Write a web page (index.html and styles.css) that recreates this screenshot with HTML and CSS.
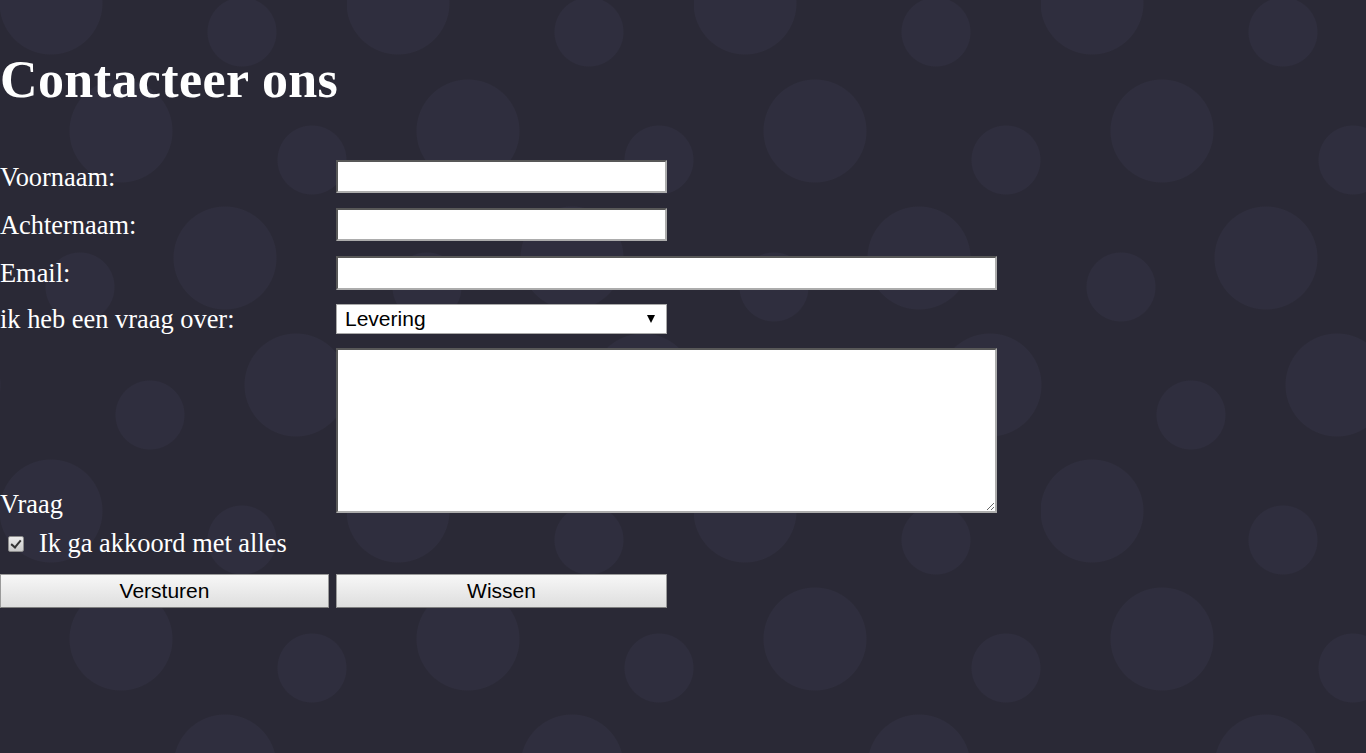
FILE: index.html
```html
<!DOCTYPE html>
<html lang="nl">
<head>
<meta charset="utf-8">
<title>Contacteer ons</title>
<link rel="stylesheet" href="styles.css">
</head>
<body>
<main class="page">
  <h1 class="title">Contacteer ons</h1>
  <form class="contact-form">
    <label class="field-label" for="voornaam">Voornaam:</label>
    <input class="text-input" id="voornaam" type="text">

    <label class="field-label" for="achternaam">Achternaam:</label>
    <input class="text-input" id="achternaam" type="text">

    <label class="field-label" for="email">Email:</label>
    <input class="text-input wide" id="email" type="email">

    <label class="field-label" for="onderwerp">ik heb een vraag over:</label>
    <div class="select-wrap">
      <select class="topic" id="onderwerp">
        <option>Levering</option>
        <option>Betaling</option>
        <option>Retour</option>
      </select>
    </div>

    <label class="field-label vraag" for="vraag">Vraag</label>
    <textarea class="question" id="vraag"></textarea>

    <div class="agree">
      <input class="check" id="akkoord" type="checkbox" checked>
      <label class="agree-label" for="akkoord">Ik ga akkoord met alles</label>
    </div>

    <button class="btn" type="submit">Versturen</button>
    <button class="btn" type="reset">Wissen</button>
  </form>
</main>
</body>
</html>
```

FILE: styles.css
```css
html, body {
  margin: 0;
  padding: 0;
}

body {
  min-height: 753px;
  color: #ffffff;
  font-family: "Liberation Serif", "Times New Roman", serif;
  background-color: #2a2936;
  background-image:
    radial-gradient(circle 52px at 51px 3px, #2f2e3e 98%, transparent 100%),
    radial-gradient(circle 52px at 51px 511px, #2f2e3e 98%, transparent 100%),
    radial-gradient(circle 52px at 121px 131px, #2f2e3e 98%, transparent 100%),
    radial-gradient(circle 52px at 225px 258px, #2f2e3e 98%, transparent 100%),
    radial-gradient(circle 52px at 296px 385px, #2f2e3e 98%, transparent 100%),
    radial-gradient(circle 52px at -51px 385px, #2f2e3e 98%, transparent 100%),
    radial-gradient(circle 35px at 242px 32px, #2f2e3e 97%, transparent 100%),
    radial-gradient(circle 35px at 242px 540px, #2f2e3e 97%, transparent 100%),
    radial-gradient(circle 35px at 312px 160px, #2f2e3e 97%, transparent 100%),
    radial-gradient(circle 35px at -35px 160px, #2f2e3e 97%, transparent 100%),
    radial-gradient(circle 35px at 80px 287px, #2f2e3e 97%, transparent 100%),
    radial-gradient(circle 35px at 150px 415px, #2f2e3e 97%, transparent 100%);
  background-size: 347px 508px;
  background-repeat: repeat;
}

.page {
  display: flex;
  flex-direction: column;
}

.title {
  margin: 51px 0 51px;
  font-size: 52px;
  line-height: 58px;
  letter-spacing: 0.4px;
  font-weight: bold;
}

.contact-form {
  display: grid;
  grid-template-columns: 329px 661px;
  grid-template-rows: 33px 33px 33px 29px 165px 31px 34px;
  column-gap: 7px;
  row-gap: 15px;
  align-items: center;
}

.field-label {
  font-size: 26.4px;
  line-height: 30px;
  white-space: nowrap;
}

.field-label.vraag {
  align-self: end;
  margin-bottom: -6px;
}

.text-input {
  box-sizing: border-box;
  width: 331px;
  height: 33px;
  margin: 0;
  padding: 2px 6px;
  background: #ffffff;
  border-width: 2px;
  border-style: inset;
  border-color: #acacac;
  font-family: "Liberation Sans", Arial, sans-serif;
  font-size: 20px;
}

.text-input.wide {
  width: 661px;
  height: 34px;
}

.select-wrap {
  position: relative;
  width: 331px;
  height: 30px;
  align-self: start;
}

.select-wrap::after {
  content: "";
  position: absolute;
  right: 12px;
  top: 11px;
  width: 0;
  height: 0;
  border-left: 4.5px solid transparent;
  border-right: 4.5px solid transparent;
  border-top: 8px solid #000000;
  pointer-events: none;
}

.topic {
  appearance: none;
  -webkit-appearance: none;
  box-sizing: border-box;
  width: 331px;
  height: 30px;
  margin: 0;
  padding: 0 0 0 8px;
  background: #ffffff;
  border: 1px solid #a9a9a9;
  border-radius: 0;
  color: #000000;
  font-family: "Liberation Sans", Arial, sans-serif;
  font-size: 21px;
  line-height: 28px;
}

.question {
  box-sizing: border-box;
  width: 661px;
  height: 165px;
  margin: 0;
  padding: 2px;
  background: #ffffff;
  border-width: 2px;
  border-style: inset;
  border-color: #acacac;
  font-family: "Liberation Mono", monospace;
  font-size: 16px;
}

.agree {
  grid-column: 1 / span 2;
  display: flex;
  align-items: center;
  gap: 15px;
  padding-left: 8px;
}

.check {
  appearance: none;
  -webkit-appearance: none;
  position: relative;
  box-sizing: border-box;
  width: 16px;
  height: 16px;
  margin: 0;
  flex: none;
  border: 1px solid #8c8c8c;
  border-radius: 2px;
  background: linear-gradient(#ececec, #c9c9c9);
}

.check::after {
  content: "";
  position: absolute;
  left: 4px;
  top: 1px;
  width: 4px;
  height: 8px;
  border-right: 2px solid #333333;
  border-bottom: 2px solid #333333;
  transform: rotate(40deg);
}

.agree-label {
  font-size: 26.4px;
  line-height: 31px;
  white-space: nowrap;
}

.btn {
  box-sizing: border-box;
  height: 34px;
  margin: 0;
  padding: 0;
  border: 1px solid #9a9a9a;
  border-bottom-color: #7e7e7e;
  border-radius: 0;
  background: linear-gradient(#f7f7f7, #dedede);
  color: #000000;
  font-family: "Liberation Sans", Arial, sans-serif;
  font-size: 21px;
}

.btn[type="submit"] {
  width: 329px;
}

.btn[type="reset"] {
  width: 331px;
}
```
